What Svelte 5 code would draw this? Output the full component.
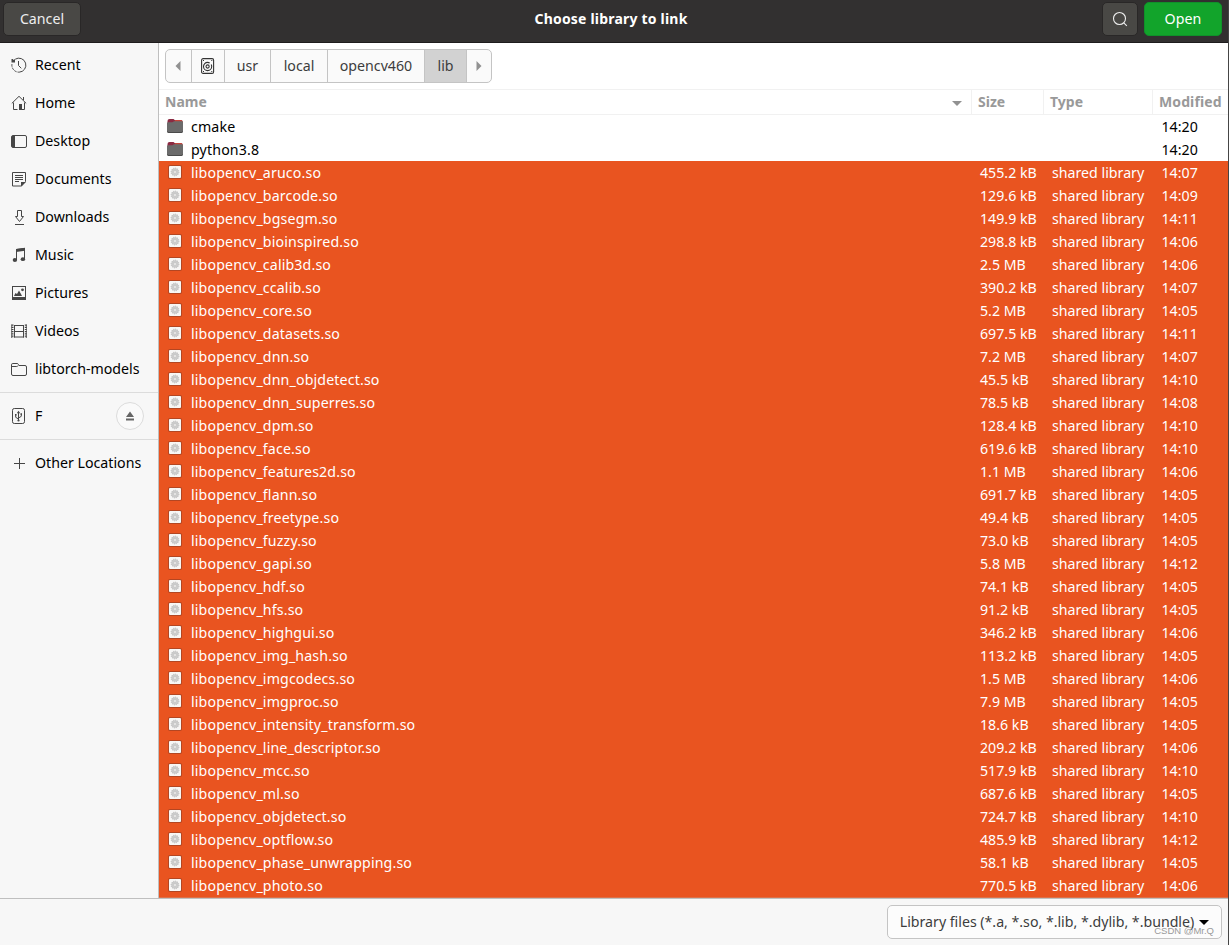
<script>
  const places = [
    { icon: "recent", label: "Recent" },
    { icon: "home", label: "Home" },
    { icon: "desktop", label: "Desktop" },
    { icon: "documents", label: "Documents" },
    { icon: "downloads", label: "Downloads" },
    { icon: "music", label: "Music" },
    { icon: "pictures", label: "Pictures" },
    { icon: "videos", label: "Videos" },
    { icon: "folder", label: "libtorch-models" },
  ];

  const folders = [
    { name: "cmake", modified: "14:20" },
    { name: "python3.8", modified: "14:20" },
  ];

  const libraries = [
    ["aruco", "455.2 kB", "14:07"],
    ["barcode", "129.6 kB", "14:09"],
    ["bgsegm", "149.9 kB", "14:11"],
    ["bioinspired", "298.8 kB", "14:06"],
    ["calib3d", "2.5 MB", "14:06"],
    ["ccalib", "390.2 kB", "14:07"],
    ["core", "5.2 MB", "14:05"],
    ["datasets", "697.5 kB", "14:11"],
    ["dnn", "7.2 MB", "14:07"],
    ["dnn_objdetect", "45.5 kB", "14:10"],
    ["dnn_superres", "78.5 kB", "14:08"],
    ["dpm", "128.4 kB", "14:10"],
    ["face", "619.6 kB", "14:10"],
    ["features2d", "1.1 MB", "14:06"],
    ["flann", "691.7 kB", "14:05"],
    ["freetype", "49.4 kB", "14:05"],
    ["fuzzy", "73.0 kB", "14:05"],
    ["gapi", "5.8 MB", "14:12"],
    ["hdf", "74.1 kB", "14:05"],
    ["hfs", "91.2 kB", "14:05"],
    ["highgui", "346.2 kB", "14:06"],
    ["img_hash", "113.2 kB", "14:05"],
    ["imgcodecs", "1.5 MB", "14:06"],
    ["imgproc", "7.9 MB", "14:05"],
    ["intensity_transform", "18.6 kB", "14:05"],
    ["line_descriptor", "209.2 kB", "14:06"],
    ["mcc", "517.9 kB", "14:10"],
    ["ml", "687.6 kB", "14:05"],
    ["objdetect", "724.7 kB", "14:10"],
    ["optflow", "485.9 kB", "14:12"],
    ["phase_unwrapping", "58.1 kB", "14:05"],
    ["photo", "770.5 kB", "14:06"],
  ];
</script>

{#snippet placeIcon(name)}
  <svg class="place-icon" viewBox="0 0 16 16" width="16" height="16">
    {#if name === "recent"}
      <path d="M4.200 2.200A7 7 0 1 1 1 6.800" stroke-dasharray="27 1 2.500 1 2.500 1 2.500 1" />
      <path d="M7.500 4v4.500l2.800 2.800" />
      <path class="solid" d="M0.500 2h1.300l.7 1 1.500-1v3.500H0.500z" />
    {:else if name === "home"}
      <path d="M0.800 8.400 8 1.300l7.200 7.100M2.500 7.500v7h4M13.500 7.500v7H11M12.500 2v3" />
      <path class="solid" d="M8 9h3v6H8z" />
    {:else if name === "desktop"}
      <rect x="0.500" y="2.500" width="15" height="12" rx="1.500" />
      <path class="solid" d="M1 3h3v11H1z" />
    {:else if name === "documents"}
      <path d="M1.500 1.500h13v9l-4 4.500h-9z" />
      <path d="M4 4.500h8M4 6.500h8M4 8.500h8M4 10.500h4" />
      <path class="solid" d="M10 15.500V11h5z" />
    {:else if name === "downloads"}
      <path d="M6.500 1.500h4v6h2L8.500 12.500l-4-5h2zM4 15.500h9" />
    {:else if name === "music"}
      <path d="M5.500 13V2.500l8-1V12" />
      <path class="solid" d="M5 2l9-1.200v3L5 5z" />
      <ellipse class="solid" cx="3.900" cy="13" rx="2.200" ry="1.900" />
      <ellipse class="solid" cx="11.900" cy="12.200" rx="2.200" ry="1.900" />
    {:else if name === "pictures"}
      <rect x="1.500" y="1.500" width="13" height="13" />
      <path class="solid" d="M1 12h14v3H1zM3 11l1.500-3L6 9l2-3.500L10 9l1 2z" />
      <circle class="solid" cx="11.500" cy="4.800" r="1.400" />
    {:else if name === "videos"}
      <path d="M3.500 2v12.500M12.500 2v12.500M3 2.500h10M3 8.500h10M3 14h10" />
      <path d="M1.500 1.500V15M14.800 1.500V15" stroke-width="2" stroke-dasharray="1.200 1" />
      <path d="M0.600 1.500V15M15.600 1.500V15" stroke-width="0.700" />
    {:else if name === "folder"}
      <path d="M.5 13V3.800q0-1.300 1.300-1.300H6q1 0 1.500 1l.5 1h6q1.500 0 1.500 1.500v7q0 1.500-1.500 1.500H2q-1.500 0-1.500-1.500M.5 5.500h5.200q1 0 1.500-1" />
    {:else if name === "usb"}
      <rect x="1.500" y="0.500" width="12" height="15" rx="1.800" />
      <path d="M7.500 4v9M4.700 7v2.300L7.500 11M10.300 6v2.300L7.500 10" />
      <path class="solid" d="M5.800 5.200 7.500 2.800l1.700 2.400zM4 6h1.600v1.600H4zM9.500 5.200H11v1.600H9.500z" />
      <circle class="solid" cx="7.500" cy="12.500" r="1.100" />
    {:else if name === "plus"}
      <path d="M8.500 3v11M3 8.500h11" />
    {/if}
  </svg>
{/snippet}

<div class="dialog">
  <header class="titlebar">
    <button class="dark-button cancel"><span>Cancel</span></button>
    <h1>Choose library to link</h1>
    <div class="actions">
      <button class="dark-button search" aria-label="Search">
        <svg width="16" height="16" viewBox="0 0 16 16">
          <circle cx="7.500" cy="7.500" r="6" />
          <path d="m11.800 11.800 3 3" />
        </svg>
      </button>
      <button class="open"><span>Open</span></button>
    </div>
  </header>

  <main>
    <nav class="sidebar">
      {#each places as place}
        <div class="place">
          {@render placeIcon(place.icon)}
          <span>{place.label}</span>
        </div>
      {/each}
      <div class="separator"></div>
      <div class="place">
        {@render placeIcon("usb")}
        <span>F</span>
        <button class="eject" aria-label="Eject">
          <svg width="10" height="10" viewBox="0 0 10 10">
            <path d="M5 0.500 9 6H1zM1 7.500h8v2H1z" />
          </svg>
        </button>
      </div>
      <div class="separator"></div>
      <div class="place">
        {@render placeIcon("plus")}
        <span>Other Locations</span>
      </div>
    </nav>

    <section class="browser">
      <div class="pathbar">
        <button class="arrow" aria-label="Back">
          <svg width="6" height="10" viewBox="0 0 6 10"><path d="M5.500 0v10L0.500 5z" /></svg>
        </button>
        <button class="disk" aria-label="File system root">
          <svg width="14" height="16" viewBox="0 0 14 16">
            <rect x="0.600" y="0.600" width="12" height="14.800" rx="1.500" />
            <circle cx="6.600" cy="8.500" r="4.100" stroke-dasharray="21 2" />
            <circle cx="6.600" cy="8.500" r="1.600" />
            <path d="M2 2.500h1M10.300 2.500h1M2 13.500h1M10.300 13.500h1" />
          </svg>
        </button>
        <button class="usr"><span>usr</span></button>
        <button class="local"><span>local</span></button>
        <button class="opencv"><span>opencv460</span></button>
        <button class="lib"><span>lib</span></button>
        <button class="arrow" aria-label="Forward">
          <svg width="6" height="10" viewBox="0 0 6 10"><path d="M0.500 0v10L5.500 5z" /></svg>
        </button>
      </div>

      <div class="columns">
        <div class="column">
          <span>Name</span>
          <svg width="10" height="5" viewBox="0 0 10 5"><path d="M0 0h10L5 5z" /></svg>
        </div>
        <div class="column"><span>Size</span></div>
        <div class="column"><span>Type</span></div>
        <div class="column"><span>Modified</span></div>
      </div>

      <div class="files">
        {#each folders as folder}
          <div class="row">
            <svg class="file-icon" width="16" height="16" viewBox="0 0 16 16">
              <path d="M0.500 3q0-2 2-2h4l1.200 1H14q1.500 0 1.500 1.500V8h-15z" fill="#8b2a42" />
              <path d="M8 2h6q1.500 0 1.500 1.500V5H7z" fill="#c5453b" />
              <path d="M0 5.200q0-1 1-1h4.500L7 3.200h8q1 0 1 1V13.500q0 1.500-1.500 1.500h-13Q0 15 0 13.500z" fill="#6b6b6b" />
              <path d="M0.500 13.500q.3 1 1.500 1h12q1.200 0 1.500-1" fill="none" stroke="#4a4a4a" />
            </svg>
            <span class="name">{folder.name}</span>
            <span></span>
            <span></span>
            <span>{folder.modified}</span>
          </div>
        {/each}
        {#each libraries as [name, size, modified]}
          <div class="row selected">
            <svg class="file-icon" width="16" height="16" viewBox="0 0 16 16">
              <rect x="1" y="1" width="14" height="14" rx="2" fill="#b34622" />
              <rect x="2" y="2" width="12" height="12" rx="1" fill="#f7f6f5" />
              <circle cx="8" cy="8" r="2.700" fill="none" stroke="#cbcbcb" stroke-width="2.200" />
              <circle cx="8" cy="8" r="3.900" fill="none" stroke="#b5b5b5" stroke-width="0.800" stroke-dasharray="1 1" />
              <circle cx="8" cy="8" r="1.400" fill="none" stroke="#b5b5b5" stroke-width="0.600" />
            </svg>
            <span class="name">libopencv_{name}.so</span>
            <span>{size}</span>
            <span>shared library</span>
            <span>{modified}</span>
          </div>
        {/each}
      </div>
    </section>
  </main>

  <footer>
    <button class="filter">
      <span>Library files (*.a, *.so, *.lib, *.dylib, *.bundle)</span>
      <svg width="10" height="5" viewBox="0 0 10 5"><path d="M0 0h10L5 5z" /></svg>
    </button>
    <span class="watermark">CSDN @Mr.Q</span>
  </footer>
</div>

<style>
  :global(body) {
    margin: 0;
  }

  .dialog {
    box-sizing: border-box;
    position: relative;
    display: flex;
    flex-direction: column;
    width: 1229px;
    height: 945px;
    overflow: hidden;
    border-right: 1px solid #454545;
    background: #fff;
    color: #000;
    font: 14.2px/23px "Noto Sans", sans-serif;
    white-space: nowrap;
  }

  button {
    box-sizing: border-box;
    display: flex;
    align-items: center;
    justify-content: center;
    margin: 0;
    padding: 0;
    font: inherit;
    letter-spacing: inherit;
    color: inherit;
  }

  button span,
  .place span,
  .column span {
    padding-bottom: 2px;
  }

  .titlebar {
    box-sizing: border-box;
    flex: none;
    display: grid;
    grid-template-columns: 1fr auto 1fr;
    align-items: start;
    height: 43px;
    padding: 2px 6px 0 3px;
    border-bottom: 1px solid #1e1c1d;
    background: #323030;
    color: #fff;
  }

  h1 {
    margin: 5px 3px 0 0;
    font-size: 14px;
    line-height: 23px;
    font-weight: 700;
    letter-spacing: 0.2px;
  }

  .dark-button {
    height: 34px;
    border: 1px solid #292727;
    border-radius: 5px;
    background: #494845;
    color: #eee;
  }

  .cancel {
    width: 78px;
  }

  .actions {
    display: flex;
    justify-content: flex-end;
    gap: 6px;
  }

  .search {
    width: 36px;
  }

  .search svg {
    fill: none;
    stroke: #eee;
    stroke-width: 1.1;
  }

  .open {
    width: 78px;
    height: 34px;
    border: 1px solid #10912a;
    border-radius: 5px;
    background: #12a42b;
    letter-spacing: 0.1px;
  }

  main {
    flex: none;
    display: flex;
    height: 855px;
  }

  .sidebar {
    box-sizing: border-box;
    flex: none;
    width: 159px;
    padding-top: 3px;
    border-right: 1px solid #bfbfbf;
    background: #f7f7f7;
  }

  .place {
    display: flex;
    align-items: center;
    gap: 8px;
    height: 38px;
    padding: 0 14px 0 11px;
  }

  .place-icon {
    flex: none;
    fill: none;
    stroke: #464646;
  }

  .place-icon .solid {
    fill: #464646;
    stroke: none;
  }

  .separator {
    height: 1px;
    margin: 4px 0;
    background: #dcdcdc;
  }

  .eject {
    width: 28px;
    height: 28px;
    margin-left: auto;
    border: 1px solid #dcdcdc;
    border-radius: 50%;
    background: #fafafa;
  }

  .eject svg {
    fill: #666;
  }

  .browser {
    flex: 1;
    min-width: 0;
  }

  .pathbar {
    display: flex;
    box-sizing: border-box;
    width: 327px;
    height: 34px;
    margin: 6px 0 6px 6px;
    overflow: hidden;
    border: 1px solid #c4c4c4;
    border-radius: 5px;
    background: #fafafa;
    color: #3d3d3d;
  }

  .pathbar button {
    border: 0;
    border-right: 1px solid #c4c4c4;
    background: none;
  }

  .pathbar button:last-child {
    border-right: 0;
  }

  .arrow {
    width: 26px;
  }

  .pathbar .arrow:first-child {
    padding-right: 2px;
  }

  .arrow:last-child {
    width: 24px;
  }

  .arrow svg {
    fill: #919191;
  }

  .disk {
    width: 33px;
  }

  .disk svg {
    fill: none;
    stroke: #333;
    stroke-width: 1.1;
  }

  .usr {
    width: 46px;
  }

  .local {
    width: 57px;
  }

  .opencv {
    width: 97px;
  }

  .pathbar .lib {
    width: 42px;
    background: #d2d2d2;
  }

  .columns {
    display: grid;
    grid-template-columns: 813px 72px 109px 75px;
    box-sizing: border-box;
    height: 26px;
    border-top: 1px solid #f1f1f1;
    border-bottom: 1px solid #f1f1f1;
    color: #999;
    font-size: 14px;
    font-weight: 700;
  }

  .column {
    display: flex;
    align-items: center;
    justify-content: space-between;
    padding: 0 9px 0 6px;
    border-right: 1px solid #f1f1f1;
  }

  .column:last-child {
    padding-right: 0;
    border-right: 0;
    letter-spacing: 0.1px;
  }

  .column svg {
    margin-top: 1px;
    fill: #919191;
  }

  .files {
    border-bottom: 1px solid #dd7049;
  }

  .row {
    display: grid;
    grid-template-columns: 24px 789px 72px 109.5px 67px;
    align-items: center;
    height: 23px;
    padding-left: 8px;
  }

  .file-icon {
    margin-bottom: 2px;
  }

  .name {
    letter-spacing: 0.14px;
  }

  .selected {
    background: #e95420;
    color: #fff;
  }

  footer {
    flex: 1;
    display: flex;
    justify-content: flex-end;
    padding: 6px 6px 0 0;
    border-top: 1px solid #bfbfbf;
    background: #f7f7f7;
  }

  .filter {
    gap: 5px;
    width: 335px;
    height: 34px;
    border: 1px solid #c4c4c4;
    border-radius: 5px;
    background: #fcfcfc;
    color: #3d3d3d;
    letter-spacing: -0.02px;
  }

  .watermark {
    position: absolute;
    right: 14px;
    bottom: 5px;
    color: #999;
    font: 9.5px/18px "Liberation Sans", sans-serif;
  }
</style>
